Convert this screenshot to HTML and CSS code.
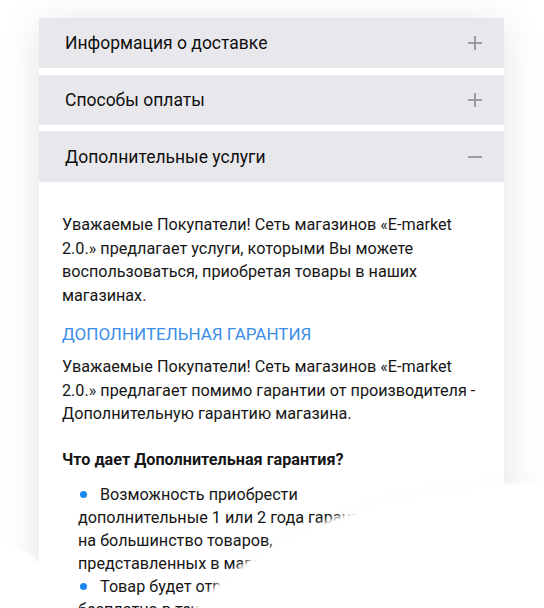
FILE: index.html
```html
<!DOCTYPE html>
<html lang="ru">
<head>
<meta charset="utf-8">
<title>Дополнительные услуги</title>
<link rel="stylesheet" href="styles.css">
</head>
<body>
<div class="page">
  <div class="card">
    <div class="acc-head">
      <span class="acc-title">Информация о доставке</span>
      <svg class="acc-icon" width="14" height="14" viewBox="0 0 14 14"><path d="M7 0v14M0 7h14" stroke="#9b9b9f" stroke-width="2" fill="none"/></svg>
    </div>
    <div class="acc-head">
      <span class="acc-title">Способы оплаты</span>
      <svg class="acc-icon" width="14" height="14" viewBox="0 0 14 14"><path d="M7 0v14M0 7h14" stroke="#9b9b9f" stroke-width="2" fill="none"/></svg>
    </div>
    <div class="acc-head">
      <span class="acc-title">Дополнительные услуги</span>
      <svg class="acc-icon" width="14" height="14" viewBox="0 0 14 14"><path d="M0 7h14" stroke="#9b9b9f" stroke-width="2" fill="none"/></svg>
    </div>
    <div class="acc-body">
      <p class="text">Уважаемые Покупатели! Сеть магазинов «E-market 2.0.» предлагает услуги, которыми Вы можете воспользоваться, приобретая товары в наших магазинах.</p>
      <h3 class="section-title">ДОПОЛНИТЕЛЬНАЯ ГАРАНТИЯ</h3>
      <p class="text">Уважаемые Покупатели! Сеть магазинов «E-market 2.0.» предлагает помимо гарантии от производителя - Дополнительную гарантию магазина.</p>
      <p class="question">Что дает Дополнительная гарантия?</p>
      <ul class="list">
        <li><span class="dot"></span>Возможность приобрести дополнительные 1 или 2 года гарантии на большинство товаров, представленных в магазине.</li>
        <li><span class="dot"></span>Товар будет отремонтирован бесплатно в течение всего срока.</li>
      </ul>
    </div>
  </div>
</div>
<div class="fade fade-right"></div>
<div class="fade fade-left"></div>
</body>
</html>
```

FILE: styles.css
```css
html, body {
  margin: 0;
  padding: 0;
  height: 608px;
  overflow: hidden;
  background: #ffffff;
}
body {
  position: relative;
  font-family: Roboto, "Liberation Sans", sans-serif;
  color: #161616;
}
.page {
  padding: 18px 40px 0 39px;
}
.card {
  background: #ffffff;
  box-shadow: 0 6px 40px rgba(0, 0, 0, 0.11);
  height: 700px;
}
.acc-head {
  height: 50px;
  background: #e8e8ec;
  display: flex;
  align-items: center;
  justify-content: space-between;
  padding: 0 22px 0 26px;
  margin-bottom: 7px;
}
.acc-head:nth-child(2) {
  margin-bottom: 6px;
}
.acc-head:nth-child(3) {
  margin-bottom: 0;
  height: 51px;
}
.acc-title {
  font-size: 17.5px;
  color: #0f0f0f;
}
.acc-icon {
  display: block;
}
.acc-body {
  padding: 31px 23px 0 23px;
}
.text {
  margin: 0;
  font-size: 16.2px;
  line-height: 23.5px;
}
.section-title {
  margin: 16px 0 9px;
  font-size: 17px;
  font-weight: 400;
  line-height: 23px;
  color: #3a8ee8;
}
.question {
  margin: 22px 0 12px;
  font-size: 16.2px;
  font-weight: 700;
  line-height: 23px;
}
.list {
  list-style: none;
  margin: 0;
  padding: 0 0 0 16px;
  width: 312px;
  font-size: 16.2px;
  line-height: 23px;
}
.dot {
  display: inline-block;
  width: 7px;
  height: 7px;
  border-radius: 50%;
  background: #1b86f0;
  vertical-align: 2px;
  margin-left: 2px;
  margin-right: 13px;
}
.fade {
  position: absolute;
  background: #ffffff;
  border-radius: 50%;
  filter: blur(2px);
}
.fade-right {
  left: 156px;
  top: 482px;
  width: 790px;
  height: 440px;
  box-shadow: 0 -4px 10px rgba(0, 0, 0, 0.015);
}
.fade-left {
  left: -79px;
  top: 544px;
  width: 158px;
  height: 272px;
}
```
